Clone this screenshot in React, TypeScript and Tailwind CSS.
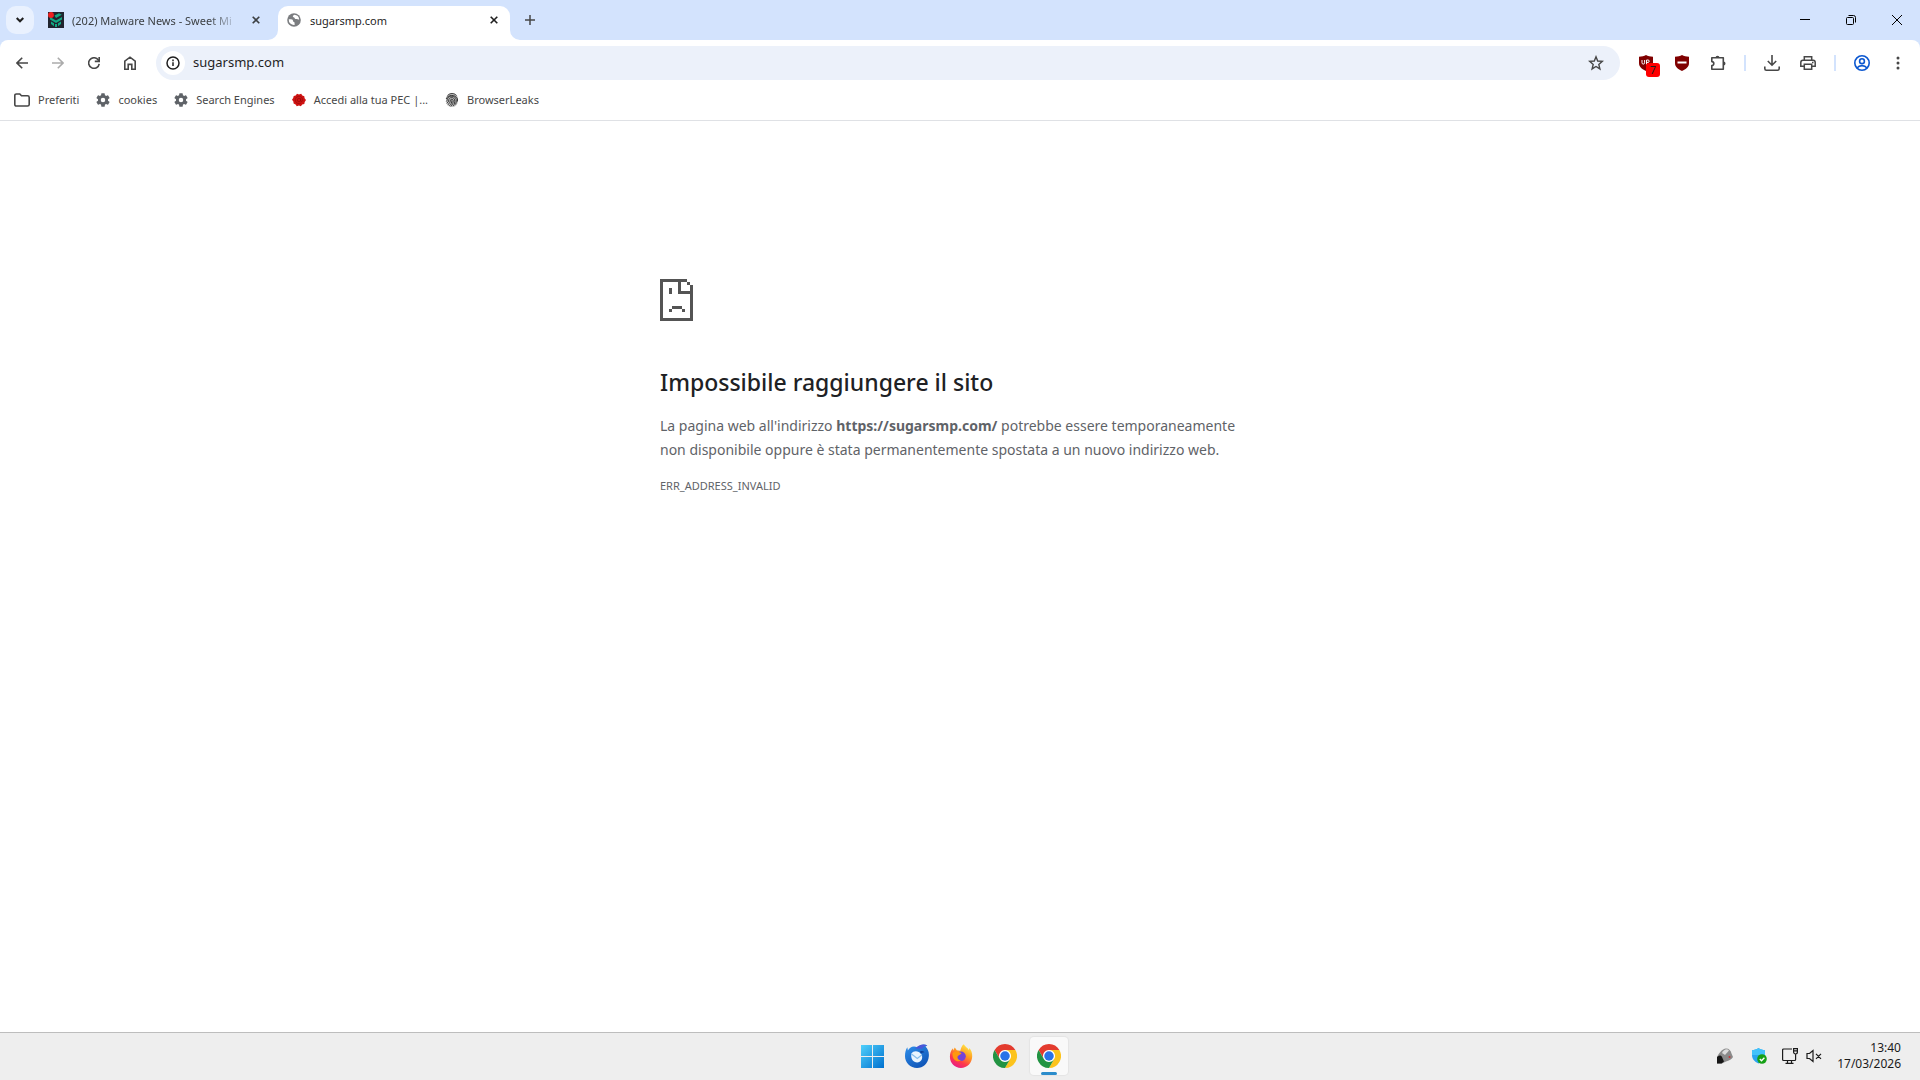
import type { ReactNode } from "react";

const stroke = {
  fill: "none",
  stroke: "currentColor",
  strokeWidth: 1.6,
} as const;

function GearIcon() {
  return (
    <svg viewBox="2 2 20 20" className="size-[14px] shrink-0" fill="#5f6368">
      <path d="M19.14 12.94c.04-.3.06-.61.06-.94 0-.32-.02-.64-.07-.94l2.03-1.58a.49.49 0 0 0 .12-.61l-1.92-3.32a.49.49 0 0 0-.59-.22l-2.39.96a7 7 0 0 0-1.62-.94l-.36-2.54a.48.48 0 0 0-.48-.41h-3.84a.48.48 0 0 0-.47.41l-.36 2.54c-.59.24-1.13.57-1.62.94l-2.39-.96a.48.48 0 0 0-.59.22L2.74 8.87a.48.48 0 0 0 .12.61l2.03 1.58a7 7 0 0 0-.01 1.88l-2.03 1.58a.49.49 0 0 0-.12.61l1.92 3.32c.12.22.37.29.59.22l2.39-.96c.5.38 1.03.7 1.62.94l.36 2.54c.05.24.24.41.48.41h3.84c.24 0 .44-.17.47-.41l.36-2.54a7 7 0 0 0 1.62-.94l2.39.96c.22.08.47 0 .59-.22l1.92-3.32a.48.48 0 0 0-.12-.61zM12 15.2a3.2 3.2 0 1 1 0-6.4 3.2 3.2 0 0 1 0 6.4" />
    </svg>
  );
}

function FolderIcon() {
  return (
    <svg viewBox="0 0 16 14" className="h-[14px] w-4 shrink-0 text-[#474747]" {...stroke}>
      <path d="M.8 11.4V2.6c0-1 .6-1.6 1.6-1.6h3.4l1.7 1.8h6c1 0 1.7.6 1.7 1.6v7c0 1-.7 1.6-1.7 1.6H2.4c-1 0-1.6-.6-1.6-1.6z" />
    </svg>
  );
}

function PecIcon() {
  return (
    <svg viewBox="0 0 14 14" className="size-[14px] shrink-0">
      <path
        d="M5 .8 7 1.4 9.2.7l1.1 1.7 2 .8.3 2.1L14 7l-1.3 1.900-.4 2-2.100.7-1.300 1.700-2-.7-2.100.6-1.200-1.800-2-.8-.2-2.100L0 6.800l1.200-1.700.5-2.100 2-.6z"
        fill="#cf1312"
      />
      <path
        d="M8.700 5.200v2.600c0 1.300 2 1.100 2-.9a3.700 3.700 0 1 0-1.600 3.100M8.700 7a1.700 1.700 0 1 1-3.400 0 1.700 1.700 0 0 1 3.400 0"
        fill="none"
        stroke="#8f0808"
        strokeWidth=".6"
      />
    </svg>
  );
}

function FingerprintIcon() {
  return (
    <svg viewBox="0 0 14 14" className="size-[14px] shrink-0">
      <path d="M7 0c3.500 0 5.800 2.300 5.800 5.500v3C12.800 12 10 14 7 14s-5.800-2-5.800-5.500v-3C1.200 2.300 3.500 0 7 0" fill="#c4c4c4" />
      <g fill="none" stroke="#2b2b2b" strokeWidth=".9">
        <path d="M2.600 2.500c2.400-2.600 6.600-2.600 8.900 0M1.200 6C2 1.800 11 .8 12.500 6v2.500M1.300 8.500c1-1 .9-1.700 1.200-2.800 1.100-3.500 7.900-3.500 8.700.8.200 1.600 0 3.400-.6 5" />
        <path d="M1.700 10.300C4.300 8.800 3.300 7 4.100 5.800c1.300-2 5.200-1.600 5.600 1.200.2 2-.2 4-1.300 6M2.800 11.700c2.500-1.500 2.300-3.500 2.600-4.700.5-1.300 2.700-1 2.800.5.100 2-.7 4.300-2.300 5.900M4.300 12.900c2-1.600 2.500-3.400 2.500-5.600" />
      </g>
    </svg>
  );
}

function GlobeIcon() {
  return (
    <svg viewBox="0 0 16 16" className="size-[14px] shrink-0">
      <circle cx="8" cy="8" r="7.800" fill="#7b7d80" />
      <path d="M2 7.200c1.600 0 3.700-.4 4.500.7.800 1-.1 1.800 1 2.200 1.300.4 1.300 1.300 1.200 3.600A6 6 0 0 1 2 7.200M8.300 2c-.8.700-1.700.8-1.600 1.900.1 1 1.500.6 1.800 1.500.3 1 1 1.700 2.200 1.500 1.200-.1 1.600.8 3.200.6A6 6 0 0 0 8.300 2" fill="#fff" />
    </svg>
  );
}

function MalwareFavicon() {
  return (
    <svg viewBox="0 0 16 16" className="size-4 shrink-0">
      <path d="M0 0h16v16H0z" fill="#20242f" />
      <path d="m2 5 6 3.500L14 5v2.500L8 11 2 7.500zM6.500 3.500 11 1.300l2.800 1.400L8 6zM3 9.500l3 1.700v3L3 12zM13 9.500l-3 1.700v3l3-2.200zM7 12h2v3H7z" fill="#12a984" />
      <circle cx="3" cy="3" r="2.900" fill="#ee2020" />
    </svg>
  );
}

function ChromeLogo() {
  return (
    <svg viewBox="0 0 48 48" className="size-6">
      <circle cx="24" cy="24" r="13" fill="#fff" />
      <path d="M24 12h20.781a23.994 23.994 0 0 0-41.564.003L13.608 30l.01-.002A11.985 11.985 0 0 1 24 12" fill="#e33b2e" />
      <path d="M34.391 30.003 24.001 48A23.994 23.994 0 0 0 44.780 12.003H24l-.003.010a11.985 11.985 0 0 1 10.394 17.990" fill="#fcc31c" />
      <path d="M13.609 30.003 3.218 12.006A23.994 23.994 0 0 0 24.003 48l10.390-17.997-.007-.007a11.985 11.985 0 0 1-20.777.007" fill="#229342" />
      <circle cx="24" cy="24" r="9.500" fill="#2a73e8" />
    </svg>
  );
}

function WindowsLogo() {
  return (
    <svg viewBox="0 0 24 24" className="size-6">
      <defs>
        <linearGradient id="win" x1="0" y1="0" x2="1" y2="1">
          <stop offset="0" stopColor="#4fd0fb" />
          <stop offset="1" stopColor="#0070cf" />
        </linearGradient>
      </defs>
      <path d="M0 1h11v11H0zM12 1h11v11H12zM0 13h11v11H0zM12 13h11v11H12z" fill="url(#win)" />
    </svg>
  );
}

function ThunderbirdLogo() {
  return (
    <svg viewBox="0 0 24 24" className="size-6">
      <defs>
        <linearGradient id="tb" x1="0" y1="0" x2=".6" y2="1">
          <stop offset="0" stopColor="#2f92ee" />
          <stop offset="1" stopColor="#1056b8" />
        </linearGradient>
      </defs>
      <path d="M12.500 3.500C15 .4 19.500-.2 22.300 1.400l-1.800 1.200C23 5 24.300 8.500 23.800 12.500 23.200 19.500 18 24 12 24 5.300 24 0 18.700 0 12.300 0 9 .6 5.600 2.300 3.300l.6 3.300C4.500 3.600 8 1.200 12.500 3.500" fill="url(#tb)" />
      <path d="M10 4.500C14.500-.2 19-.2 22.300 1.400c-3 .3-4.500 1.600-5 3.300z" fill="#4b56d8" />
      <path d="M6.500 9.500C8.500 6.500 13.500 6.500 16.500 10.500c2 4.200-.8 8-4.300 8-4 0-7-4-5.700-9" fill="#e9f4fe" />
      <path d="m6.500 10 5.800 4.500 4.700-3.800" fill="none" stroke="#86bdec" strokeWidth="1.200" />
      <path d="M15 7.500c2-.8 3.500-.3 4.500.8-1.700.2-2.800.6-3.800 1.200z" fill="#0d3f98" />
    </svg>
  );
}

function FirefoxLogo() {
  return (
    <svg viewBox="0 0 24 24" className="size-6">
      <defs>
        <linearGradient id="ff" x1=".8" y1="0" x2=".25" y2="1">
          <stop offset="0" stopColor="#fff14a" />
          <stop offset=".4" stopColor="#ff9a20" />
          <stop offset=".7" stopColor="#ff3b48" />
          <stop offset="1" stopColor="#e5188c" />
        </linearGradient>
      </defs>
      <path d="M14.800.2c1 2.400 4 3.500 5.200 6l.2-2.200c2.200 2.300 3.100 5 3 8.500-.2 6.500-5 11.400-11.300 11.400C5.700 23.900.9 19 .9 12.700c0-3 .8-5.900 2.900-8.400l.3 2.200 1.700-3 2 2.800 3.500.4C12 4.500 12.500 1.700 14.800.2" fill="url(#ff)" />
      <circle cx="12" cy="12.300" r="4.800" fill="#7542d8" />
      <path d="M3.500 9c2.500-2.500 6-1.800 9 .2-1 2-3.500 1.600-4 3.600-.4 2 1.500 4 4 3.500-3.500 2.500-9.500.5-9-7.300" fill="#ff980e" />
    </svg>
  );
}

function SadPageIcon() {
  return (
    <svg viewBox="0 0 33 42" className="h-[42px] w-[33px]" fill="#545454" shapeRendering="crispEdges">
      <path d="M0 0h27v3H0zM0 0h3v42H0zM0 39h33v3H0zM30 6h3v36h-3zM27 3h3v3h-3zM18 0h3v15h-3zM18 12h15v3H18zM9 9h3v6H9zM12 27h10v3H12zM9 30h3v3H9zM22 30h3v3h-3z" />
    </svg>
  );
}

function ShieldIcon({ children }: { children: ReactNode }) {
  return (
    <svg viewBox="0 0 16 16" className="size-4">
      <path d="M8 0c1.800 1.300 4.200 1.700 7 1.700V8c0 4-3 6.300-7 8-4-1.700-7-4-7-8V1.700C3.800 1.700 6.200 1.300 8 0" fill="#800000" />
      {children}
    </svg>
  );
}

function CloseIcon() {
  return (
    <svg viewBox="0 0 8 8" className="size-2" {...stroke}>
      <path d="m.7.7 6.600 6.600M7.300.7.700 7.300" />
    </svg>
  );
}

function IconButton({ label, children, className = "" }: { label: string; children: ReactNode; className?: string }) {
  return (
    <button
      type="button"
      aria-label={label}
      className={`relative flex h-7 w-9 shrink-0 items-center justify-center text-[#474747] ${className}`}
    >
      {children}
    </button>
  );
}

function TabStrip() {
  return (
    <header className="flex h-10 items-start bg-[#d3e3fd]">
      <button
        type="button"
        aria-label="Cerca schede"
        className="mt-[6px] ml-[6px] flex size-7 shrink-0 items-center justify-center rounded-[10px] bg-[#e9f1fe] text-[#1f1f1f]"
      >
        <svg viewBox="0 0 8 6" className="h-[6px] w-2" {...stroke} strokeWidth="2">
          <path d="m.7 1 3.300 3.300L7.300 1" />
        </svg>
      </button>

      <div className="ml-[14px] flex h-10 w-[230px] items-center gap-2 text-[#3c4043]">
        <MalwareFavicon />
        <span className="w-[167px] overflow-hidden pt-[2px] text-[11px] whitespace-nowrap [mask-image:linear-gradient(to_right,#000_82%,transparent)]">
          (202) Malware News - Sweet Mi
        </span>
        <button type="button" aria-label="Chiudi scheda" className="flex size-[18px] items-center justify-center">
          <CloseIcon />
        </button>
      </div>

      <div className="relative mt-[6px] flex h-[34px] w-[232px] items-center rounded-t-[10px] bg-white pr-[7px] pb-[6px] pl-[9px] text-[#1f1f1f]">
        <svg viewBox="0 0 10 10" className="absolute bottom-0 -left-[10px] size-[10px]" fill="#fff">
          <path d="M10 0v10H0A10 10 0 0 0 10 0" />
        </svg>
        <svg viewBox="0 0 10 10" className="absolute -right-[10px] bottom-0 size-[10px]" fill="#fff">
          <path d="M0 0v10h10A10 10 0 0 1 0 0" />
        </svg>
        <GlobeIcon />
        <span className="ml-[9px] grow pt-[2px] text-[11px]">sugarsmp.com</span>
        <button type="button" aria-label="Chiudi scheda" className="flex size-[18px] items-center justify-center">
          <CloseIcon />
        </button>
      </div>

      <button type="button" aria-label="Nuova scheda" className="ml-[6px] flex h-10 w-7 items-center justify-center text-[#474747]">
        <svg viewBox="0 0 10 10" className="size-[10px]" {...stroke} strokeWidth="1.500">
          <path d="M5 0v10M0 5h10" />
        </svg>
      </button>

      <div className="ml-auto flex h-10 text-black">
        <button type="button" aria-label="Riduci a icona" className="flex w-[46px] items-center justify-center">
          <svg viewBox="0 0 10 10" className="size-[10px]" {...stroke} strokeWidth="1">
            <path d="M0 4.500h10" />
          </svg>
        </button>
        <button type="button" aria-label="Ripristina" className="flex w-[46px] items-center justify-center">
          <svg viewBox="0 0 10 10" className="size-[10px]" {...stroke} strokeWidth="1">
            <path d="M1.500 2.500h5a1 1 0 0 1 1 1v5a1 1 0 0 1-1 1h-5a1 1 0 0 1-1-1v-5a1 1 0 0 1 1-1M2.500.500h5a2 2 0 0 1 2 2v5" />
          </svg>
        </button>
        <button type="button" aria-label="Chiudi" className="flex w-[46px] items-center justify-center">
          <svg viewBox="0 0 10 10" className="size-[10px]" {...stroke} strokeWidth="1">
            <path d="m0 0 10 10M10 0 0 10" />
          </svg>
        </button>
      </div>
    </header>
  );
}

function Toolbar() {
  return (
    <div className="bg-[#d3e3fd]">
      <div className="flex h-[46px] items-center rounded-t-[8px] bg-white px-1">
        <IconButton label="Indietro">
          <svg viewBox="0 0 12 12" className="size-3" {...stroke}>
            <path d="M12 6H1.200M6.200.8 1 6l5.200 5.200" />
          </svg>
        </IconButton>
        <IconButton label="Avanti" className="opacity-45">
          <svg viewBox="0 0 12 12" className="size-3" {...stroke}>
            <path d="M0 6h10.800M5.800.8 11 6l-5.200 5.200" />
          </svg>
        </IconButton>
        <IconButton label="Ricarica">
          <svg viewBox="0 0 12 12" className="size-3" {...stroke}>
            <path d="M11.200 6.800A5.300 5.300 0 1 1 10.300 3L11 4" />
            <path d="M11.200 0v4.400H6.800" />
          </svg>
        </IconButton>
        <IconButton label="Home">
          <svg viewBox="0 0 12 14" className="h-[14px] w-3" {...stroke}>
            <path d="M.8 13.200V5.200L6 1.200l5.200 4v8H7.800V8.400H4.200v4.800z" />
          </svg>
        </IconButton>

        <div className="ml-2 flex h-[34px] grow items-center rounded-full bg-[#ecf1fa] px-[5px]">
          <button
            type="button"
            aria-label="Informazioni sul sito"
            className="flex size-6 shrink-0 items-center justify-center rounded-full bg-white text-[#1f1f1f]"
          >
            <svg viewBox="0 0 14 14" className="size-[14px]" {...stroke} strokeWidth="1.500">
              <circle cx="7" cy="7" r="6" />
              <path d="M7 6.200V10M7 3.600v1.600" />
            </svg>
          </button>
          <input
            aria-label="Barra degli indirizzi"
            defaultValue="sugarsmp.com"
            className="ml-2 min-w-0 grow bg-transparent text-[13px] text-[#1f1f1f] outline-none"
          />
          <IconButton label="Aggiungi ai preferiti" className="w-[38px]">
            <svg viewBox="0 0 16 16" className="size-4" {...stroke} strokeWidth="1.400">
              <path d="m8 1.800 1.700 4.200 4.600.4-3.500 3 1.100 4.500L8 11.500l-3.900 2.400 1.100-4.500-3.500-3 4.600-.4z" />
            </svg>
          </IconButton>
        </div>

        <div className="ml-2 flex items-center">
          <IconButton label="uBlock Origin">
            <ShieldIcon>
              <path d="M4 5v2.800a1.200 1.200 0 0 0 2.600 0V5M8.500 9.500V5H10a1.200 1.200 0 0 1 0 2.400H8.500" fill="none" stroke="#fff" strokeWidth="1" />
            </ShieldIcon>
            <span className="absolute top-[14px] left-[18px] flex size-[14px] items-center justify-center rounded-[3px] bg-[#fe0000] text-[11px] text-[#1f1f1f]">
              7
            </span>
          </IconButton>
          <IconButton label="uBlock Origin Lite">
            <ShieldIcon>
              <path d="M3.500 6.500h9v2h-9z" fill="#fff" />
            </ShieldIcon>
          </IconButton>
          <IconButton label="Estensioni">
            <svg viewBox="0 0 16 16" className="size-4">
              <path d="M1.800 2.800h11.500v11.500H1.800v-3.700a2 2 0 0 0 0-4z" {...stroke} strokeLinejoin="round" />
              <path d="M5.500 2.800a2 2 0 0 1 4 0zM13.500 6.500a2 2 0 0 1 0 4z" fill="currentColor" />
            </svg>
          </IconButton>
          <span className="mx-2 h-4 w-[2px] bg-[#d3e3fd]" />
          <IconButton label="Download">
            <svg viewBox="0 0 16 16" className="size-4" {...stroke}>
              <path d="M8 0v10M3.800 6 8 10.200 12.200 6M.8 11.500v2c0 1 .6 1.700 1.600 1.700h11.200c1 0 1.600-.7 1.600-1.700v-2" />
            </svg>
          </IconButton>
          <IconButton label="Stampa">
            <svg viewBox="0 0 16 16" className="size-4" {...stroke} strokeWidth="1.500">
              <path d="M4.300 5V1.700h7.400V5M3.800 11.300h-3V7.500c0-1.500.8-2.300 2-2.300h10.400c1.200 0 2 .8 2 2.300v3.800h-3M4.300 9.300h7.400v5H4.300z" />
              <path d="M12 7.500h1.500" />
            </svg>
          </IconButton>
          <span className="mx-2 h-4 w-[2px] bg-[#d3e3fd]" />
          <IconButton label="Profilo">
            <svg viewBox="0 0 16 16" className="size-4 text-[#0b57d0]" {...stroke}>
              <circle cx="8" cy="8" r="7.200" />
              <circle cx="8" cy="6.200" r="2.400" />
              <path d="M3 13c1.300-1.700 3-2.400 5-2.400s3.700.7 5 2.400" />
            </svg>
          </IconButton>
          <IconButton label="Menu">
            <svg viewBox="0 0 4 14" className="h-[14px] w-1" fill="currentColor">
              <circle cx="2" cy="2" r="1.500" />
              <circle cx="2" cy="7" r="1.500" />
              <circle cx="2" cy="12" r="1.500" />
            </svg>
          </IconButton>
        </div>
      </div>
    </div>
  );
}

const bookmarks = [
  { label: "Preferiti", icon: <FolderIcon /> },
  { label: "cookies", icon: <GearIcon /> },
  { label: "Search Engines", icon: <GearIcon /> },
  { label: "Accedi alla tua PEC |...", icon: <PecIcon /> },
  { label: "BrowserLeaks", icon: <FingerprintIcon /> },
];

function BookmarksBar() {
  return (
    <nav className="flex h-[35px] items-center gap-[17px] border-b border-[#dfe1e5] pb-[6px] pl-[14px]">
      {bookmarks.map((b) => (
        <a key={b.label} href="#" className="flex items-center gap-2 text-[11px] whitespace-nowrap text-[#474747]">
          {b.icon}
          {b.label}
        </a>
      ))}
    </nav>
  );
}

function ErrorPage() {
  return (
    <main className="grow px-6 pt-[158px]">
      <div className="mx-auto max-w-[600px] text-[#5f6368]">
        <SadPageIcon />
        <h1 className="mt-[43px] text-[23px] leading-[36px] font-medium text-[#202124]">
          Impossibile raggiungere il sito
        </h1>
        <p className="mt-[14px] text-sm leading-6">
          La pagina web all'indirizzo <strong>https://sugarsmp.com/</strong> potrebbe essere temporaneamente non
          disponibile oppure è stata permanentemente spostata a un nuovo indirizzo web.
        </p>
        <p className="mt-[14px] text-[11px] leading-5">ERR_ADDRESS_INVALID</p>
      </div>
    </main>
  );
}

function TaskbarButton({ label, active, children }: { label: string; active?: boolean; children: ReactNode }) {
  return (
    <button
      type="button"
      aria-label={label}
      className={`relative flex h-[38px] w-[38px] items-center justify-center rounded-[4px] ${
        active ? "bg-[#f9f9f9] shadow-[0_0_1px_1px_#e4e4e4]" : ""
      }`}
    >
      {children}
      {active && <span className="absolute bottom-0 h-[3px] w-4 rounded-full bg-[#2b8ccb]" />}
    </button>
  );
}

function Taskbar() {
  return (
    <footer className="grid h-12 grid-cols-[1fr_auto_1fr] items-center border-t border-[#bdbdbd] bg-[#eeeeee] pb-[2px] pl-[2px]">
      <div className="col-start-2 flex items-center gap-[6px]">
        <TaskbarButton label="Start">
          <WindowsLogo />
        </TaskbarButton>
        <TaskbarButton label="Thunderbird">
          <ThunderbirdLogo />
        </TaskbarButton>
        <TaskbarButton label="Firefox">
          <FirefoxLogo />
        </TaskbarButton>
        <TaskbarButton label="Chrome">
          <ChromeLogo />
        </TaskbarButton>
        <TaskbarButton label="Chrome, 1 finestra" active>
          <ChromeLogo />
        </TaskbarButton>
      </div>

      <div className="flex items-center justify-end pr-[19px] text-[#1b1b1b]">
        <svg viewBox="0 0 16 16" className="size-4">
          <path d="M0 9c2-4 5-8 9-8.500 3 0 5 2 5.500 5L16 9c-1 2.500-4 3.500-7 4.500L5 15.500H0z" fill="#8a8a8a" />
          <path d="M0 9c2-2 4-2 5 0l2 4.500-2.500 2H0z" fill="#161616" />
          <path d="M5 5c2-4 5-4.500 7-2.500L8 7z" fill="#dcdcdc" />
          <circle cx="12.500" cy="9" r="1" fill="#c33" />
        </svg>
        <svg viewBox="0 0 16 16" className="ml-[18px] size-4">
          <path d="M7.500 0c2 1.500 4.200 2 6.500 2v5c0 4-2.500 6.500-6.500 8.500C3.500 13.500 1 11 1 7V2c2.300 0 4.500-.5 6.500-2" fill="#2aa5f0" />
          <path d="M7.500 0c2 1.500 4.200 2 6.500 2v5H1V2c2.300 0 4.500-.5 6.500-2" fill="#43c2fb" />
          <circle cx="11" cy="11" r="4.800" fill="#16a016" />
          <path d="m8.800 11 1.700 1.700 2.900-3" fill="none" stroke="#fff" strokeWidth="1.300" />
        </svg>
        <svg viewBox="0 0 16 16" className="ml-[15px] size-4" {...stroke} strokeWidth="1.200">
          <path d="M10 1H1.600a1 1 0 0 0-1 1v9.500a1 1 0 0 0 1 1h11a1 1 0 0 0 1-1V6M5.500 12.500v3M9.500 12.500v3M3.500 15.400h8M11.600.600h3.800v3.500a1.900 1.900 0 0 1-3.800 0zM11.500 2.800h4" />
        </svg>
        <svg viewBox="0 0 16 16" className="ml-2 size-4" {...stroke} strokeWidth="1.200">
          <path d="M1 5.500h2.500L7 2.500v11L3.500 10.500H1zM10 5.800l5 5M15 5.800l-5 5" />
        </svg>
        <time dateTime="2026-03-17T13:40" className="ml-[15px] text-right text-xs leading-4">
          13:40
          <br />
          17/03/2026
        </time>
      </div>
    </footer>
  );
}

export default function App() {
  return (
    <div className="flex min-h-screen flex-col bg-white font-['Noto_Sans','Open_Sans',sans-serif]">
      <TabStrip />
      <Toolbar />
      <BookmarksBar />
      <ErrorPage />
      <Taskbar />
    </div>
  );
}
